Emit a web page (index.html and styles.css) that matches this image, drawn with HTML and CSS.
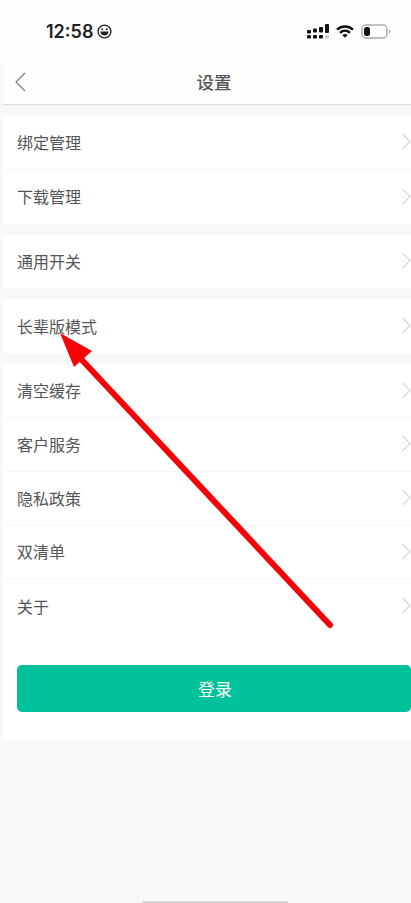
FILE: index.html
```html
<!DOCTYPE html>
<html lang="zh-CN">
<head>
    <meta charset="UTF-8">
    <meta name="viewport" content="width=device-width, initial-scale=1.0">
    <title>设置</title>
    <link rel="stylesheet" href="styles.css">
</head>
<body>
    <div class="screen">
        <!-- Status Bar -->
        <div class="status-bar">
            <div class="status-time">
                <span>12:58</span>
                <svg class="status-face" width="15" height="15" viewBox="0 0 15 15">
                    <circle cx="7.5" cy="7.5" r="6.4" fill="none" stroke="#222" stroke-width="1.4"/>
                    <path d="M3.4 7.6h8.2c0 2.6-1.8 4-4.1 4s-4.1-1.4-4.1-4z" fill="#222"/>
                    <circle cx="5.2" cy="5.3" r="1" fill="#222"/>
                    <circle cx="9.8" cy="5.3" r="1" fill="#222"/>
                </svg>
            </div>
            <div class="status-icons">
                <svg width="22" height="15" viewBox="0 0 22 15">
                    <g fill="#111">
                        <rect x="0" y="6" width="4" height="3.5" rx="1"/>
                        <rect x="0" y="11" width="4" height="3.5" rx="1"/>
                        <rect x="6" y="4.5" width="4" height="4" rx="1"/>
                        <rect x="6" y="11" width="4" height="3.5" rx="1"/>
                        <rect x="12" y="3" width="4" height="5.5" rx="1"/>
                        <rect x="12" y="11" width="4" height="3.5" rx="1"/>
                        <rect x="18" y="0" width="4" height="9" rx="1"/>
                    </g>
                    <rect x="18" y="11" width="4" height="3.5" rx="1" fill="#ccc"/>
                </svg>
                <svg width="18" height="13" viewBox="0 0 18 13">
                    <path d="M1 4.6C5.6 0.4 12.4 0.4 17 4.6" fill="none" stroke="#111" stroke-width="2.4"/>
                    <path d="M4 7.8C6.9 5.1 11.1 5.1 14 7.8" fill="none" stroke="#111" stroke-width="2.4"/>
                    <path d="M6.3 10L9 12.8 11.7 10C10.1 8.7 7.9 8.7 6.3 10z" fill="#111"/>
                </svg>
                <svg width="30" height="15" viewBox="0 0 30 15">
                    <rect x="1" y="1" width="25" height="13" rx="4" fill="#fff" stroke="#aaa" stroke-width="1.4"/>
                    <rect x="3" y="3" width="6" height="9" rx="2.5" fill="#111"/>
                    <path d="M28 5.5c1 .4 1.4 1.1 1.4 2s-.4 1.6-1.4 2z" fill="#aaa"/>
                </svg>
            </div>
        </div>

        <!-- Nav Bar -->
        <header class="nav-bar">
            <svg class="nav-back" width="11" height="20" viewBox="0 0 11 20">
                <path d="M10 1L1 10 10 19" fill="none" stroke="#777" stroke-width="1.1"/>
            </svg>
            <h1>设置</h1>
        </header>

        <!-- Settings Groups -->
        <section class="group group-first">
            <div class="row"><span>绑定管理</span><svg class="row-arrow" width="9" height="17" viewBox="0 0 9 17"><path d="M0.5 1L8 8.5 0.5 16" fill="none" stroke="#d8d8d8" stroke-width="1.2"/></svg></div>
            <div class="row"><span>下载管理</span><svg class="row-arrow" width="9" height="17" viewBox="0 0 9 17"><path d="M0.5 1L8 8.5 0.5 16" fill="none" stroke="#d8d8d8" stroke-width="1.2"/></svg></div>
        </section>

        <section class="group">
            <div class="row"><span>通用开关</span><svg class="row-arrow" width="9" height="17" viewBox="0 0 9 17"><path d="M0.5 1L8 8.5 0.5 16" fill="none" stroke="#d8d8d8" stroke-width="1.2"/></svg></div>
        </section>

        <section class="group">
            <div class="row"><span>长辈版模式</span><svg class="row-arrow" width="9" height="17" viewBox="0 0 9 17"><path d="M0.5 1L8 8.5 0.5 16" fill="none" stroke="#d8d8d8" stroke-width="1.2"/></svg></div>
        </section>

        <section class="group group-last">
            <div class="row"><span>清空缓存</span><svg class="row-arrow" width="9" height="17" viewBox="0 0 9 17"><path d="M0.5 1L8 8.5 0.5 16" fill="none" stroke="#d8d8d8" stroke-width="1.2"/></svg></div>
            <div class="row"><span>客户服务</span><svg class="row-arrow" width="9" height="17" viewBox="0 0 9 17"><path d="M0.5 1L8 8.5 0.5 16" fill="none" stroke="#d8d8d8" stroke-width="1.2"/></svg></div>
            <div class="row"><span>隐私政策</span><svg class="row-arrow" width="9" height="17" viewBox="0 0 9 17"><path d="M0.5 1L8 8.5 0.5 16" fill="none" stroke="#d8d8d8" stroke-width="1.2"/></svg></div>
            <div class="row"><span>双清单</span><svg class="row-arrow" width="9" height="17" viewBox="0 0 9 17"><path d="M0.5 1L8 8.5 0.5 16" fill="none" stroke="#d8d8d8" stroke-width="1.2"/></svg></div>
            <div class="row"><span>关于</span><svg class="row-arrow" width="9" height="17" viewBox="0 0 9 17"><path d="M0.5 1L8 8.5 0.5 16" fill="none" stroke="#d8d8d8" stroke-width="1.2"/></svg></div>
            <button class="login-btn">登录</button>
        </section>

        <div class="home-line"></div>

        <!-- Red annotation arrow -->
        <svg class="annotation" width="411" height="903" viewBox="0 0 411 903">
            <path d="M330 625L82 360" fill="none" stroke="#f60206" stroke-width="6" stroke-linecap="round"/>
            <path d="M60 333L92 351 74 367z" fill="#f60206"/>
        </svg>
    </div>
</body>
</html>
```

FILE: styles.css
```css
/* General Styles */
body {
    margin: 0;
    padding: 0;
    background-color: #f8f8f8;
    font-family: 'Noto Sans CJK SC', 'Liberation Sans', sans-serif;
}

.screen {
    position: relative;
    width: 411px;
    height: 903px;
    overflow: hidden;
    background-color: #f8f8f8;
}

/* Status Bar */
.status-bar {
    display: flex;
    justify-content: space-between;
    align-items: center;
    height: 63px;
    padding: 0 20px 0 46px;
    box-sizing: border-box;
    background-color: #fdfdfd;
}

.status-time {
    display: flex;
    align-items: center;
    gap: 4px;
    font-family: 'Inter', 'Liberation Sans', sans-serif;
    font-size: 18px;
    font-weight: 600;
    color: #222;
}

.status-icons {
    display: flex;
    align-items: center;
    gap: 7px;
}

/* Nav Bar */
.nav-bar {
    display: flex;
    justify-content: center;
    align-items: center;
    position: relative;
    height: 41px;
    margin-left: 3px;
    padding: 0 0 5px 14px;
    box-sizing: border-box;
    background-color: #fdfdfd;
    box-shadow: 0 1px 1px #ddd;
}

.nav-bar h1 {
    margin: 0;
    font-size: 17.5px;
    font-weight: 500;
    color: #555;
}

.nav-back {
    position: absolute;
    left: 12px;
    top: 9px;
}

/* Settings Groups */
.group {
    margin: 11px 0 0 3px;
    background-color: #fff;
}

.group-first {
    margin-top: 12px;
}

.group-last {
    padding-bottom: 28px;
}

.row {
    display: flex;
    justify-content: space-between;
    align-items: center;
    height: 53.8px;
    padding: 0 0 1px 14px;
    box-sizing: border-box;
    border-bottom: 1px solid #f6f6f6;
    font-size: 16px;
    color: #555;
}

.row:last-of-type {
    border-bottom: none;
}

.row-arrow {
    flex-shrink: 0;
}

.login-btn {
    display: block;
    width: 394px;
    height: 47px;
    margin: 32px 0 0 14px;
    padding: 0 0 1px 2px;
    border: none;
    border-radius: 5px;
    background-color: #00c29a;
    color: #fff;
    font-family: inherit;
    font-size: 17px;
    text-align: center;
}

/* Home indicator */
.home-line {
    position: absolute;
    left: 142px;
    bottom: 0;
    width: 146px;
    height: 2px;
    background-color: #d8d8d8;
}

/* Annotation */
.annotation {
    position: absolute;
    top: 0;
    left: 0;
}
```
